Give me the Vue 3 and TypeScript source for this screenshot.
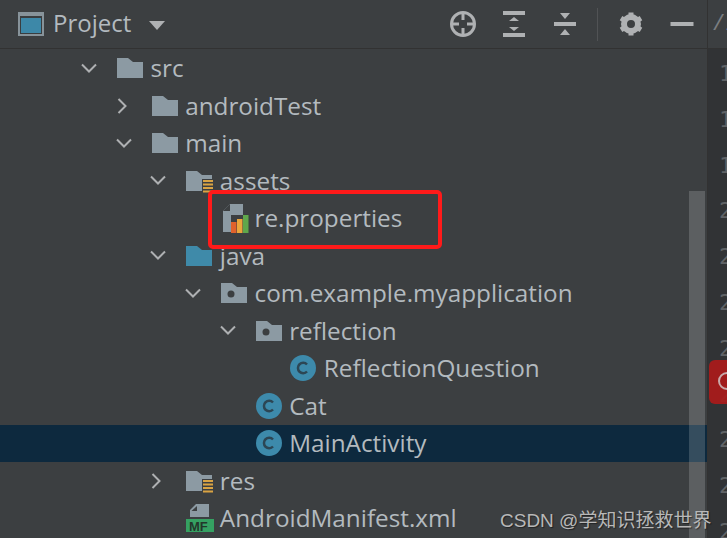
<template>
  <div class="window">
    <section class="panel">
      <header class="panel-header">
        <svg class="project-icon" width="26" height="24" viewBox="0 0 26 24">
          <rect width="26" height="24" fill="#87939a" />
          <rect x="2" y="4" width="22" height="18" fill="#3a3d3f" />
          <rect x="3" y="6" width="20" height="15" fill="#3d88a8" />
        </svg>
        <span class="panel-title">Project</span>
        <svg class="title-caret" width="16" height="9" viewBox="0 0 16 9"><path d="M0 0H16L8 9Z" fill="#afb1b3" /></svg>
        <div class="toolbar">
          <svg class="tool" width="26" height="26" viewBox="0 0 26 26" fill="none" stroke="#afb1b3" stroke-width="3">
            <circle cx="13" cy="13" r="11.5" />
            <path d="M13 2V9M13 17V24M2 13H9M17 13H24" />
          </svg>
          <svg class="tool" width="26" height="26" viewBox="0 0 26 26" fill="#afb1b3">
            <path d="M2 0H24V4H2ZM2 22H24V26H2ZM13 6L18 10H8ZM13 20L8 16H18Z" />
          </svg>
          <svg class="tool" width="26" height="26" viewBox="0 0 26 26" fill="#afb1b3">
            <path d="M2 11H24V15H2ZM8 2H18L13 8ZM13 18L18 24H8Z" />
          </svg>
          <span class="toolbar-sep"></span>
          <svg class="tool tool--after-sep" width="26" height="26" viewBox="0 0 26 26" fill="none" stroke="#afb1b3">
            <circle cx="13" cy="13" r="7" stroke-width="6" />
            <path stroke-width="5" d="M13 1.5V5M13 21V24.5M3 7.2L6 9M20 17L23 18.8M3 18.8L6 17M20 9L23 7.2" />
          </svg>
          <svg class="tool" width="26" height="26" viewBox="0 0 26 26" fill="#afb1b3"><rect x="1.500" y="11" width="23" height="4" /></svg>
        </div>
      </header>

      <ul class="tree">
        <li
          v-for="row in rows"
          :key="row.label"
          class="tree-row"
          :class="{ 'tree-row--selected': row.selected }"
          :style="{ paddingLeft: 78 + row.depth * 34.67 + 'px' }"
        >
          <span class="chevron-slot">
            <svg v-if="row.arrow === 'down'" width="18" height="11" viewBox="0 0 18 11" fill="none" stroke="#aeb0b2" stroke-width="2"><path d="M2 1.500L9 8.500L16 1.500" /></svg>
            <svg v-else-if="row.arrow === 'right'" class="chevron-right" width="11" height="18" viewBox="0 0 11 18" fill="none" stroke="#aeb0b2" stroke-width="2"><path d="M1.500 2L8.500 9L1.500 16" /></svg>
          </span>

          <svg class="row-icon" width="28" height="30" viewBox="0 0 28 30">
            <template v-if="row.icon === 'folder' || row.icon === 'package'">
              <path d="M0 5H11L16 9H26V25H0Z" fill="#8c9aa3" />
              <circle v-if="row.icon === 'package'" cx="10" cy="16" r="3.500" fill="#3c3f41" />
            </template>
            <template v-else-if="row.icon === 'res-folder' || row.icon === 'java-folder'">
              <path d="M0 5H11L16 9H26V25H0Z" :fill="row.icon === 'java-folder' ? '#3f8aa9' : '#8c9aa3'" />
              <template v-if="row.icon === 'res-folder'">
                <rect x="16" y="13" width="13" height="17" fill="#3c3f41" />
                <path d="M17 15H27M17 18.500H27M17 22H27M17 25.500H27" stroke="#d9a343" stroke-width="2" />
              </template>
            </template>
            <template v-else-if="row.icon === 'class'">
              <circle cx="13" cy="15" r="13" fill="#3d8aab" />
              <path d="M17 11.500A5.200 5.200 0 1 0 17 18.500" fill="none" stroke="#2c4654" stroke-width="2.500" />
            </template>
            <template v-else-if="row.icon === 'properties'">
              <path d="M9 1H22V29H2V8Z" fill="#8c9aa3" />
              <path d="M9 1V8H2Z" fill="#3c3f41" />
              <rect x="10" y="12" width="18" height="18" fill="#3c3f41" />
              <rect x="10" y="19" width="5.500" height="11" fill="#e0622c" />
              <rect x="16" y="16" width="5.500" height="14" fill="#eba63b" />
              <rect x="22" y="12" width="5.500" height="18" fill="#5fa74b" />
            </template>
            <template v-else-if="row.icon === 'manifest'">
              <path d="M10 1H23V14H4V7Z" fill="#8c9aa3" />
              <path d="M11 3V8H5.500Z" fill="#3c3f41" />
              <rect y="16" width="28" height="13" fill="#35a162" />
              <text x="3" y="27.500" class="mf-text">MF</text>
            </template>
          </svg>
          <span class="row-label">{{ row.label }}</span>
        </li>
      </ul>

      <div class="scroll-thumb"></div>
      <div class="callout"></div>
    </section>

    <aside class="gutter">
      <div class="gutter-tab"><span class="slash">/</span><span class="tab-i">if</span></div>
      <div class="line-numbers">
        <div v-for="n in lines" :key="n" class="line-number">{{ n }}</div>
      </div>
      <div class="breakpoint"><span class="breakpoint-ring"></span></div>
    </aside>

    <div class="watermark">CSDN @学知识拯救世界</div>
  </div>
</template>

<script setup lang="ts">
type Arrow = 'down' | 'right' | null;

interface Row {
  label: string;
  depth: number;
  arrow: Arrow;
  icon: string;
  selected?: boolean;
}

const rows: Row[] = [
  { label: 'src', depth: 0, arrow: 'down', icon: 'folder' },
  { label: 'androidTest', depth: 1, arrow: 'right', icon: 'folder' },
  { label: 'main', depth: 1, arrow: 'down', icon: 'folder' },
  { label: 'assets', depth: 2, arrow: 'down', icon: 'res-folder' },
  { label: 're.properties', depth: 3, arrow: null, icon: 'properties' },
  { label: 'java', depth: 2, arrow: 'down', icon: 'java-folder' },
  { label: 'com.example.myapplication', depth: 3, arrow: 'down', icon: 'package' },
  { label: 'reflection', depth: 4, arrow: 'down', icon: 'package' },
  { label: 'ReflectionQuestion', depth: 5, arrow: null, icon: 'class' },
  { label: 'Cat', depth: 4, arrow: null, icon: 'class' },
  { label: 'MainActivity', depth: 4, arrow: null, icon: 'class', selected: true },
  { label: 'res', depth: 2, arrow: 'right', icon: 'res-folder' },
  { label: 'AndroidManifest.xml', depth: 2, arrow: null, icon: 'manifest' },
];

const lines = [17, 18, 19, 20, 21, 22, 23, 24, 25, 26, 27];
</script>

<style>
body {
  overflow: hidden;
}
</style>

<style scoped>
.window {
  position: relative;
  display: flex;
  width: 727px;
  height: 538px;
  overflow: hidden;
  background: #3c3f41;
  font-family: "Open Sans", "Noto Sans", sans-serif;
  color: #b3babf;
}
.panel {
  position: relative;
  width: 707px;
  flex: none;
  overflow: hidden;
}
.panel-header {
  display: flex;
  align-items: center;
  height: 49px;
  padding: 0 12px 0 18px;
  box-sizing: border-box;
  border-bottom: 1px solid #323232;
}
.panel-title {
  margin-left: 9px;
  margin-top: -3px;
  font-size: 24px;
}
.title-caret {
  margin-left: 18px;
  margin-top: 2px;
}
.toolbar {
  display: flex;
  align-items: center;
  margin-left: auto;
}
.tool {
  margin-left: 25px;
}
.tool--after-sep {
  margin-left: 20px;
}
.toolbar-sep {
  width: 1px;
  height: 33px;
  margin-left: 19px;
  background: #515355;
}
.tree {
  margin: 0;
  padding: 0.5px 0 0;
  list-style: none;
}
.tree-row {
  display: flex;
  align-items: center;
  height: 37.5px;
  font-size: 24.3px;
  white-space: nowrap;
}
.tree-row--selected {
  background: #0d293e;
}
.row-label {
  margin-top: -1px;
}
.chevron-slot {
  display: flex;
  align-items: center;
  width: 39px;
  flex: none;
}
.chevron-slot svg {
  margin-left: 2px;
}
.chevron-right {
  margin-left: 4px !important;
}
.row-icon {
  flex: none;
  width: 28px;
  margin-right: 5.5px;
  overflow: visible;
}
.mf-text {
  font: 700 13px "Liberation Sans", sans-serif;
  fill: #23372b;
}
.scroll-thumb {
  position: absolute;
  left: 689px;
  top: 191px;
  bottom: 0;
  width: 16px;
  background: rgba(255, 255, 255, 0.17);
}
.callout {
  position: absolute;
  left: 208px;
  top: 190px;
  width: 234px;
  height: 59px;
  box-sizing: border-box;
  border: 4px solid #ff1a1a;
  border-radius: 5px;
}
.watermark {
  position: absolute;
  left: 500px;
  top: 505px;
  font: 19px "Liberation Sans", "Noto Sans CJK SC", sans-serif;
  color: #b8b8b8;
  text-shadow: 1px 1px 1px rgba(0, 0, 0, 0.45);
  white-space: nowrap;
}
.gutter {
  position: relative;
  flex: 1;
  min-width: 0;
  border-left: 1px solid #323232;
  background: #313335;
}
.gutter-tab {
  height: 49px;
  padding-left: 4px;
  box-sizing: border-box;
  background: #3c3f41;
  border-bottom: 1px solid #323232;
  font: 22px/49px "Liberation Mono", monospace;
  white-space: nowrap;
}
.slash {
  color: #7a7d80;
}
.tab-i {
  color: #6f97b8;
}
.line-numbers {
  padding: 2px 0 0 11px;
  font: 22px/45.800px "DejaVu Sans Mono", monospace;
  color: #606366;
}
.breakpoint {
  position: absolute;
  left: 1px;
  top: 360px;
  width: 26px;
  height: 44px;
  border-radius: 6px;
  background: rgba(170, 26, 26, 0.92);
}
.breakpoint-ring {
  position: absolute;
  left: 9px;
  top: 12px;
  width: 18px;
  height: 18px;
  box-sizing: border-box;
  border: 2px solid #c9aaaa;
  border-radius: 50%;
}
</style>
